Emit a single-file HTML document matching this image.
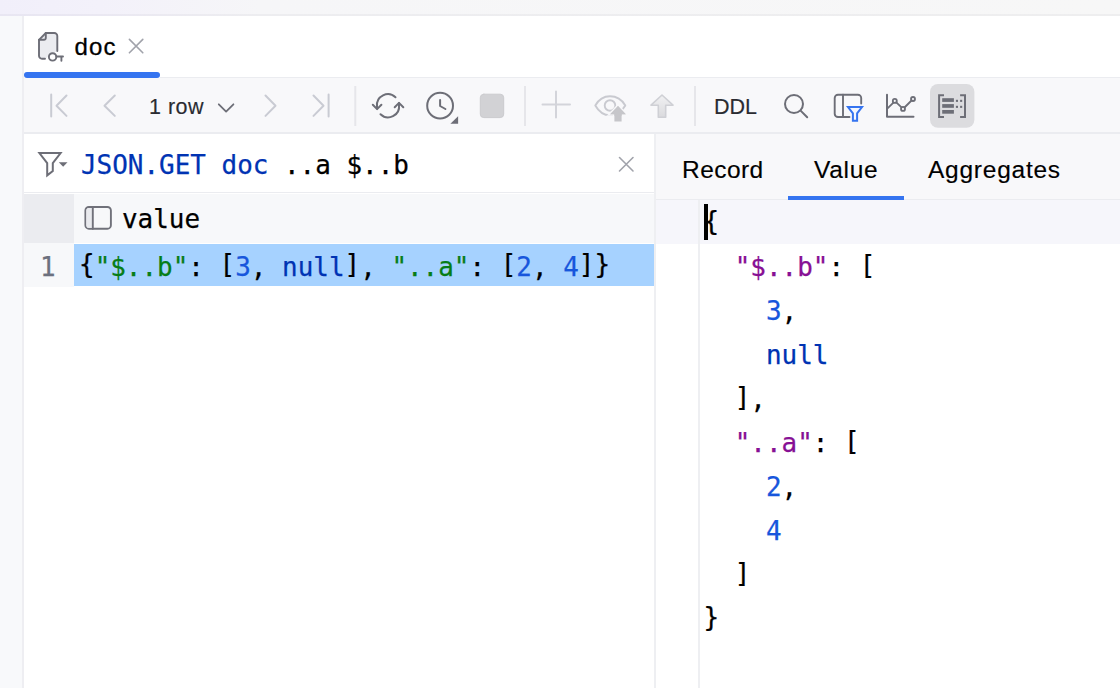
<!DOCTYPE html>
<html><head><meta charset="utf-8">
<style>
*{box-sizing:border-box;margin:0;padding:0}
html,body{width:1120px;height:688px;overflow:hidden;background:#f7f8fa;font-family:"Liberation Sans",sans-serif;color:#000}
.abs{position:absolute}
#top{left:0;top:0;width:1120px;height:16px;background:linear-gradient(to right,#f1effa 0,#f3f1fa 100px,#f6f6f8 260px,#f7f7f7 100%);border-bottom:2px solid rgba(0,0,20,0.035)}
#gut{left:0;top:16px;width:24px;height:672px;background:#f8f9fb;border-right:2px solid #eeeef2}
#tabs{left:24px;top:16px;width:1096px;height:62px;background:#fff}
#tabul{left:24px;top:72px;width:136px;height:6px;background:#3574f0;border-radius:3px}
#tabline{left:160px;top:77px;width:960px;height:1px;background:#ebecf0}
#tb{left:24px;top:78px;width:1096px;height:56px;background:#f8f8fa;border-bottom:2px solid #ebecf0}
#left{left:24px;top:134px;width:630px;height:554px;background:#fff}
#filt{left:24px;top:134px;width:630px;height:59px;background:#fff;border-bottom:1px solid #ebecf0}
#hdr{left:24px;top:194px;width:630px;height:49px;background:#f7f8fa}
#hdrn{left:24px;top:194px;width:50px;height:49px;background:#ebecf0}
#rown{left:24px;top:243px;width:50px;height:44px;background:#f7f8fa}
#rowsel{left:74px;top:244px;width:580px;height:42px;background:#a6d2ff}
#right{left:654px;top:134px;width:466px;height:554px;background:#fff;border-left:2px solid #eeeff2}
#rtabs{left:656px;top:134px;width:464px;height:66px;background:#f8f8fa;border-bottom:1px solid #ebecf0}
#rtul{left:788px;top:196px;width:116px;height:4px;background:#3574f0}
#egut{left:656px;top:200px;width:44px;height:488px;border-right:2px solid #eeeff2}
#curline{left:656px;top:200px;width:464px;height:44px;background:#f6f6fb}
#caret{left:704px;top:204px;width:4px;height:36px;background:#000}
.mono{font-family:"DejaVu Sans Mono","Liberation Mono",monospace;font-size:25.95px;white-space:pre;line-height:44px;-webkit-text-stroke:0.25px currentColor}
.ui{font-size:26px;white-space:pre;-webkit-text-stroke:0.15px currentColor}
i{font-style:normal;display:inline-block;transform:translateY(-2.6px)}
.kw{color:#0033b3}.str{color:#067d17}.num{color:#1756dc}.key{color:#871094}
svg{position:absolute;overflow:visible}
</style></head><body>
<div class="abs" id="top"></div>
<div class="abs" id="gut"></div>
<div class="abs" id="tabs"></div>
<div class="abs" id="tabline"></div>
<div class="abs" id="tabul"></div>
<div class="abs ui" style="left:74.5px;top:32px;line-height:30px;font-size:24px;letter-spacing:1.2px;-webkit-text-stroke:0.3px #000">doc</div>
<div class="abs" id="tb"></div>
<div class="abs ui" style="left:149px;top:91.5px;line-height:30px;font-size:21.5px;letter-spacing:0.5px;color:#2a2b31">1 row</div>
<div class="abs ui" style="left:714px;top:91.5px;line-height:30px;font-size:21.5px;color:#2a2b31">DDL</div>
<div class="abs" id="left"></div>
<div class="abs" id="filt"></div>
<div class="abs mono" style="left:81px;top:143px"><span class="kw">JSON.GET doc</span> ..a $..b</div>
<div class="abs" id="hdr"></div>
<div class="abs" id="hdrn"></div>
<div class="abs mono" style="left:122px;top:197px">value</div>
<div class="abs" id="rown"></div>
<div class="abs" id="rowsel"></div>
<div class="abs mono" style="left:40px;top:245px;color:#6c707e">1</div>
<div class="abs mono" style="left:79px;top:245px"><i>{</i><span class="str">"$..b"</span>: <i>[</i><span class="num">3</span>, <span class="kw">null</span><i>]</i>, <span class="str">"..a"</span>: <i>[</i><span class="num">2</span>, <span class="num">4</span><i>]}</i></div>
<div class="abs" id="right"></div>
<div class="abs" id="rtabs"></div>
<div class="abs" id="rtul"></div>
<div class="abs ui" style="left:682px;top:155px;line-height:30px;font-size:24.5px;letter-spacing:0.45px">Record</div>
<div class="abs ui" style="left:814px;top:155px;line-height:30px;font-size:24.5px;letter-spacing:0.7px">Value</div>
<div class="abs ui" style="left:928px;top:155px;line-height:30px;font-size:24.5px;letter-spacing:0.75px">Aggregates</div>
<div class="abs" id="curline"></div>
<div class="abs" id="egut"></div>
<div class="abs" id="caret"></div>
<div class="abs mono" style="left:703.5px;top:201px;transform:translateY(0.4px)"><i>{</i>
  <span class="key">"$..b"</span>: <i>[</i>
    <span class="num">3</span>,
    <span class="kw">null</span>
  <i>]</i>,
  <span class="key">"..a"</span>: <i>[</i>
    <span class="num">2</span>,
    <span class="num">4</span>
  <i>]</i>
<i>}</i></div>
<svg id="ico" width="1120" height="688" viewBox="0 0 1120 688" style="left:0;top:0" fill="none" stroke-linecap="round" stroke-linejoin="round">
<!-- tab icon -->
<g stroke="#6d6e77" stroke-width="1.9">
<path d="M45 58.800H42a3 3 0 0 1-3-3V39.800l6.800-6.800h8.500a3 3 0 0 1 3 3v15" fill="#ebecf0"/>
<path d="M39 39.800h5a1.800 1.800 0 0 0 1.800-1.800v-5"/>
<circle cx="52.600" cy="56.900" r="3.700" fill="#fff"/>
<path d="M56.500 56.500h6.500M61.400 57v3.700"/>
</g>
<path d="M129.400 39.400l13.400 13.400M142.800 39.400l-13.400 13.400" stroke="#a1a3ab" stroke-width="1.600"/>
<!-- pager -->
<g stroke="#c9cbd3" stroke-width="2">
<path d="M51.200 94.500v22M66.500 95.500l-10 10.200 10 10.200"/>
<path d="M114.800 95.500l-10.300 10.200 10.300 10.200"/>
<path d="M265.500 95.500l10 10.200-10 10.200"/>
<path d="M313.500 95.500l10 10.200-10 10.200M328.600 94.500v22"/>
</g>
<path d="M218.800 104.300l7.300 7.300 7.300-7.300" stroke="#6d6e77" stroke-width="1.800"/>
<!-- separators -->
<g stroke="#e6e6ea" stroke-width="2" stroke-linecap="butt">
<path d="M355.300 86v40M525 86v40M695 86v40"/>
</g>
<!-- reload -->
<g stroke="#6d6e77" stroke-width="2">
<path d="M395.500 97.300A11 11 0 0 0 377 106.500v2"/>
<path d="M372.800 104.800l4.300 4.300 4.300-4.300"/>
<path d="M380.500 114.300A11 11 0 0 0 399 105v-2"/>
<path d="M394.700 107.200l4.300-4.300 4.300 4.300"/>
</g>
<!-- clock -->
<g stroke="#6d6e77" stroke-width="2">
<circle cx="440.100" cy="105.700" r="12.900"/>
<path d="M440.100 100v6l5.300 3"/>
</g>
<path d="M450.400 123.800h7.700v-7.500z" fill="#6d6e77"/>
<!-- stop -->
<rect x="480.300" y="94.200" width="23.400" height="23.400" rx="3.500" fill="#d2d2d5" stroke="#cbcbce" stroke-width="1"/>
<!-- plus -->
<path d="M556 91.500v26M542.500 104.600h27.500" stroke="#d3d4da" stroke-width="2"/>
<!-- eye -->
<g stroke="#c9cad0" stroke-width="1.900">
<path d="M595.300 105.500C599 99 604.500 96.300 610 96.300s11.500 2.700 15.300 9.200c-3.800 6.500-9.800 9.800-15.300 9.800s-11-3.300-14.700-9.800z"/>
<circle cx="610" cy="105.500" r="5.300"/>
</g>
<path d="M618 106l7.800 8.200h-4.200v7.300h-7.200v-7.300h-4.200z" fill="#c6c6ca" stroke="#f8f8fa" stroke-width="3" stroke-linejoin="miter" paint-order="stroke"/>
<rect x="606" y="115.800" width="22" height="8" fill="#f8f8fa"/>
<path d="M618 106l7.800 8.200h-4.200v7.300h-7.200v-7.300h-4.200z" fill="#c6c6ca"/>
<!-- up arrow -->
<linearGradient id="ug" x1="0" y1="0" x2="0" y2="1"><stop offset="0" stop-color="#f1f1f3"/><stop offset="1" stop-color="#dadadd"/></linearGradient>
<path d="M662 95l11 10.200h-7.300v12h-7.400v-12h-7.300z" fill="url(#ug)" stroke="#cfd0d5" stroke-width="1.600"/>
<!-- search -->
<g stroke="#6d6e77" stroke-width="2">
<circle cx="794" cy="104" r="9"/>
<path d="M800.600 110.600l6.600 6.600"/>
</g>
<!-- table filter -->
<g stroke="#6d6e77" stroke-width="1.900">
<path d="M849.500 117H838a3.300 3.300 0 0 1-3.300-3.300V98a3.300 3.300 0 0 1 3.300-3.300h19.900a3.300 3.300 0 0 1 3.300 3.300v5.500"/>
<path d="M843 94.700v22.300"/>
</g>
<path d="M848 107h14l-4.900 6.300v7.400h-4.200v-7.400z" fill="#f3f7ff" stroke="#3574f0" stroke-width="2" stroke-linejoin="miter"/>
<!-- chart -->
<g stroke="#6d6e77" stroke-width="2">
<path d="M887 94.800v22h26.500"/>
</g>
<g stroke="#6d6e77" stroke-width="1.800">
<path d="M887.800 108.200l5.600-5.600M896.300 102.400l5.200 5M904.500 107.500l7-7"/>
<circle cx="894.800" cy="100.900" r="2"/><circle cx="903" cy="108.900" r="2"/><circle cx="913" cy="99" r="2"/>
</g>
<!-- selected btn -->
<rect x="930" y="84" width="44.400" height="43.800" rx="8" fill="#dcdcdf"/>
<g stroke="#6d6e77" stroke-width="2" stroke-linecap="butt" stroke-linejoin="miter">
<path d="M944 95.200H939.100v21.700h4.900M960.100 95.200h4.900v21.700h-4.900"/>
</g>
<g fill="#6d6e77">
<rect x="942.200" y="98.200" width="11.700" height="3.700"/><rect x="942.200" y="104.100" width="11.700" height="3.700"/><rect x="942.200" y="110" width="11.700" height="3.700"/>
<rect x="955.900" y="99.800" width="2.100" height="2.100"/><rect x="960.100" y="99.800" width="2.100" height="2.100"/>
<rect x="955.900" y="105.800" width="2.100" height="2.100"/><rect x="960.100" y="105.800" width="2.100" height="2.100"/>
</g>
<!-- filter icon -->
<path d="M39.400 153.100h21.200l-7.800 10v8l-5.600 4.300v-12.300z" stroke="#6d6e77" stroke-width="2" stroke-linejoin="miter"/>
<path d="M58.800 162.300h8.700l-4.350 4.400z" fill="#6d6e77"/>
<!-- filter close -->
<path d="M619.500 157.500l13.500 13.500M633 157.500l-13.500 13.500" stroke="#a1a3ab" stroke-width="1.600"/>
<!-- column icon -->
<rect x="85.400" y="207" width="25.500" height="21.700" rx="3.500" fill="#f7f8fa" stroke="#70717a" stroke-width="1.900"/>
<path d="M86.400 210.500a2.500 2.500 0 0 1 2.500-2.500h3.900v19.700h-3.900a2.500 2.500 0 0 1-2.500-2.500z" fill="#e9eaee"/>
<path d="M92.800 207v21.700" stroke="#70717a" stroke-width="1.900"/>
</svg>
</body></html>
